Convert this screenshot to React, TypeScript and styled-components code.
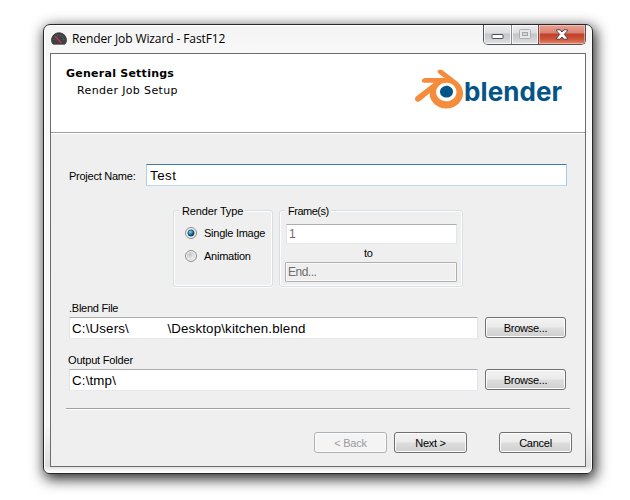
import React from "react";
import styled, { createGlobalStyle, css } from "styled-components";

const GlobalStyle = createGlobalStyle`
  * { box-sizing: border-box; }
  html, body { margin: 0; padding: 0; background: #fff; }
  body { width: 630px; height: 500px; overflow: hidden; }
  input { outline: none; }
`;

const uiFont = css`
  font-family: "Liberation Sans", Arial, sans-serif;
  font-size: 11px;
  line-height: 14px;
  letter-spacing: -0.25px;
  color: #000;
`;

const Desktop = styled.div`
  width: 630px;
  height: 500px;
  padding: 24px 0 0 43px;
`;

const Window = styled.div`
  width: 550px;
  height: 450px;
  border: 1px solid #26282b;
  border-radius: 7px 7px 6px 6px;
  padding: 0 6px 6px;
  background: linear-gradient(to bottom, #f4f4f4 0, #fafafa 40px, #f8f8f8 400px, #dedede 441px, #fff 447px);
  box-shadow: inset 0 0 0 1px #fff, 2px 4px 14px 1px rgba(0, 0, 0, 0.85);
`;

const TitleBar = styled.div`
  height: 28px;
  display: flex;
  align-items: flex-start;
`;

const AppIcon = styled.svg`
  display: block;
  margin: 7px 0 0 1px;
`;

const Title = styled.div<{ $spacing: number }>`
  flex: 1;
  margin: 5px 0 0 5px;
  font: 12px/18px "Open Sans", "Noto Sans", sans-serif;
  letter-spacing: ${(p) => p.$spacing}px;
  color: #000;
  white-space: nowrap;
`;

const CaptionButtons = styled.div`
  display: flex;
  height: 20px;
  width: 103px;
  border: 1px solid #50535c;
  border-top: 0;
  border-radius: 0 0 5px 5px;
  overflow: hidden;
`;

const CaptionButton = styled.button<{ $kind: "min" | "max" | "close" }>`
  width: ${(p) => (p.$kind === "min" ? 28 : p.$kind === "max" ? 27 : 46)}px;
  height: 19px;
  padding: 0;
  display: flex;
  align-items: center;
  justify-content: center;
  border: 0;
  border-right: ${(p) => (p.$kind === "close" ? "0" : p.$kind === "max" ? "1px solid #7e4a48" : "1px solid #8b8d94")};
  box-shadow: inset 0 0 0 1px
    ${(p) => (p.$kind === "close" ? "rgba(255, 215, 200, 0.55)" : "rgba(255, 255, 255, 0.75)")};
  background: ${(p) =>
    p.$kind === "close"
      ? "linear-gradient(#eaa293 0, #d98272 8px, #c2402a 9px, #cc5138 14px, #e08b6b 19px)"
      : "linear-gradient(#eeeef0 0, #dddee1 8px, #c3c5ca 9px, #cfd1d5 14px, #e2e3e6 19px)"};
`;

const Panel = styled.div`
  height: 414px;
  border: 1px solid #6d6d6d;
  background: #efefef;
`;

const Header = styled.div`
  height: 80px;
  display: flex;
  justify-content: space-between;
  background: #fff;
  border-bottom: 1px solid #fff;
  box-shadow: inset 0 -1px 0 #a0a0a0;
`;

const Headings = styled.div`
  padding: 12px 0 0 15px;
  font-family: "DejaVu Sans", Verdana, sans-serif;
  font-size: 11px;
  white-space: nowrap;
`;

const Heading = styled.div`
  font-weight: 700;
  line-height: 15px;
  letter-spacing: 0.25px;
`;

const SubHeading = styled.div`
  margin: 2px 0 0 11px;
  line-height: 15px;
  letter-spacing: 0.36px;
`;

const Logo = styled.div`
  display: flex;
  width: 170px;
  padding-top: 11px;
`;

const LogoMark = styled.svg`
  flex: none;
  display: block;
`;

const LogoText = styled.span`
  margin: 12px 0 0 1px;
  font: 700 26px/30px Inter, sans-serif;
  letter-spacing: 0.1px;
  color: #045488;
`;

const Body = styled.div`
  padding: 30px 15px 0 18px;
`;

const Label = styled.label<{ $width?: number; $shift?: number; $spacing?: number }>`
  ${uiFont}
  display: block;
  width: ${(p) => (p.$width ? `${p.$width}px` : "auto")};
  margin-left: ${(p) => p.$shift ?? 0}px;
  letter-spacing: ${(p) => p.$spacing ?? -0.25}px;
  white-space: pre;
`;

const Row = styled.div`
  display: flex;
  align-items: flex-start;
`;

const NameRow = styled(Row)`
  & > label {
    padding-top: 5px;
  }
`;

const Input = styled.input<{ $width: number; $focused?: boolean }>`
  width: ${(p) => p.$width}px;
  height: 22px;
  padding: 1px 2px 0 ${(p) => (p.$focused ? 3 : 2)}px;
  border: 1px solid;
  border-color: ${(p) => (p.$focused ? "#3d7bad #a4c9e3 #b7d9ed #b5cfe7" : "#abadb3 #e2e3ea #e3e9ef #e2e3ea")};
  border-radius: 1px;
  background: #fff;
  font: 13.33px/18px "Liberation Sans", Arial, sans-serif;
  letter-spacing: ${(p) => (p.$focused ? 0.5 : 0.15)}px;
  color: #000;
`;

const FrameInput = styled(Input)`
  display: block;
  height: 20px;
  margin-left: 1px;
  padding-top: 0;
  font-size: 12px;
  color: #7a5f7d;
  &:disabled {
    margin: 0;
    border-color: #afafaf;
    box-shadow: inset 0 0 0 1px #f9f9f9;
    background: #efefef;
    color: #6d6d6d;
    letter-spacing: -0.5px;
  }
`;

const Groups = styled.div`
  display: flex;
  gap: 6px;
  margin: 24px 0 0 104px;
`;

const Group = styled.div<{ $width: number }>`
  width: ${(p) => p.$width}px;
  height: 77px;
  padding-left: 5px;
  border: 1px solid #d5dfe5;
  border-radius: 3px;
  box-shadow: inset 0 0 0 1px #fff, 0 1px 0 #fbfbfb;
`;

const Legend = styled.div<{ $spacing: number }>`
  ${uiFont}
  width: fit-content;
  margin: -7px 0 0;
  padding: 0 2px 0 3px;
  letter-spacing: ${(p) => p.$spacing}px;
  background: #efefef;
`;

const Radio = styled.div`
  ${uiFont}
  display: flex;
  align-items: center;
  height: 23px;
  padding-left: 6px;
  gap: 7px;
  white-space: nowrap;
`;

const RadioList = styled.div`
  padding-top: 3px;
`;

const FrameFields = styled.div`
  padding-top: 6px;
  & > label {
    margin: 2px 0 2px 79px;
  }
`;

const Field = styled.div`
  margin-top: 14px;
  & > label {
    margin-bottom: 2px;
  }
`;

const Button = styled.button<{ $width: number }>`
  ${uiFont}
  flex: none;
  width: ${(p) => p.$width}px;
  height: 21px;
  padding: 0;
  border: 1px solid #707070;
  border-radius: 3px;
  background: linear-gradient(#f2f2f2 0, #ebebeb 9px, #dddddd 10px, #cfcfcf 19px);
  box-shadow: inset 0 0 0 1px #fcfcfc;
  &:disabled {
    border-color: #adb2b5;
    background: #f4f4f4;
    color: #9a9a9a;
  }
`;

const BrowseRow = styled(Row)`
  gap: 7px;
`;

const Separator = styled.div`
  height: 2px;
  margin: 17px 0 22px -3px;
  width: 504px;
  border-top: 1px solid #a0a0a0;
  background: #fff;
`;

const Footer = styled.div`
  display: flex;
  gap: 7px;
  padding-left: 245px;
  & > :last-child {
    margin-left: 25px;
  }
`;

function RadioDot({ checked }: { checked?: boolean }) {
  const id = checked ? "dot-on" : "dot-off";
  return (
    <svg width="12" height="12" viewBox="0 0 12 12">
      <defs>
        <radialGradient id={id} cx="0.35" cy="0.3" r="0.8">
          <stop offset="0" stopColor={checked ? "#8adcf5" : "#bfc4c9"} />
          <stop offset="0.5" stopColor={checked ? "#267dad" : "#dcdfe1"} />
          <stop offset="1" stopColor={checked ? "#06233d" : "#f4f5f5"} />
        </radialGradient>
      </defs>
      <circle cx="6" cy="6" r="5.5" fill="#f6f6f6" stroke="#8a8c8e" />
      <circle cx="6" cy="6" r="4" fill={checked ? "#d5e0e8" : "#c9cdd1"} />
      <circle cx="6" cy="6" r={checked ? 3.1 : 3.5} fill={`url(#${id})`} stroke={checked ? "#173953" : "none"} strokeWidth="0.7" />
    </svg>
  );
}

export default function App() {
  return (
    <>
      <GlobalStyle />
      <Desktop>
        <Window>
          <TitleBar>
            <AppIcon width="16" height="13" viewBox="0 0 16 13">
              <path d="M2.2 12.2C.6 10.8.2 8.8.7 6.6 1.6 2.9 4.4.8 8 .8s6.4 2.1 7.3 5.8c.5 2.2.1 4.2-1.5 5.6z" fill="#414247" stroke="#28292d" strokeWidth=".7" />
              <path d="M2.6 7.5h1M3.8 4.7l.8.6M6 2.8l.4.8M10 2.8l-.4.8M12.2 4.7l-.8.6M12.4 7.5h1" stroke="#7d7e84" strokeWidth=".7" />
              <path d="M4.2 4.5l6.4 6.6" stroke="#e0343d" strokeWidth="1.1" />
            </AppIcon>
            <Title $spacing={-0.1}>Render Job Wizard - FastF12</Title>
            <CaptionButtons>
              <CaptionButton $kind="min" aria-label="Minimize">
                <svg width="13" height="17" viewBox="0 0 13 17">
                  <rect x="1" y="8.5" width="11" height="4" rx=".5" fill="#fff" stroke="#4c4f63" />
                </svg>
              </CaptionButton>
              <CaptionButton $kind="max" aria-label="Maximize">
                <svg width="12" height="11" viewBox="0 0 12 11">
                  <rect x=".5" y=".5" width="11" height="9" rx="1" fill="#e8e8e9" stroke="#aeafb3" />
                  <rect x="3.5" y="3.5" width="5" height="3" fill="#d5d6d8" stroke="#a5a6ab" />
                </svg>
              </CaptionButton>
              <CaptionButton $kind="close" aria-label="Close">
                <svg width="12" height="11" viewBox="0 0 12 11">
                  <path d="M.6.8h3.5L6 3 7.9.8h3.5v1.1L8.3 5.4l3.1 3.6v1.2H7.9L6 8l-1.9 2.2H.6V9l3.1-3.6L.6 1.9z" fill="#fff" stroke="#51414b" strokeWidth="1" />
                </svg>
              </CaptionButton>
            </CaptionButtons>
          </TitleBar>
          <Panel>
            <Header>
              <Headings>
                <Heading>General Settings</Heading>
                <SubHeading>Render Job Setup</SubHeading>
              </Headings>
              <Logo>
                <LogoMark width="48" height="48" viewBox="0 0 24 24">
                  <path fill="#045488" d="M12.51 13.214c.046-.8.438-1.506 1.03-2.006a3.424 3.424 0 0 1 2.212-.79c.85 0 1.631.3 2.211.79.592.5.983 1.206 1.028 2.005.045.823-.285 1.586-.865 2.153a3.389 3.389 0 0 1-2.374.938 3.393 3.393 0 0 1-2.376-.938c-.58-.567-.91-1.33-.865-2.152" />
                  <path fill="#f58c3c" d="M7.35 14.831c.006.314.106.922.256 1.398a7.372 7.372 0 0 0 1.593 2.757 8.227 8.227 0 0 0 2.787 2.001 8.947 8.947 0 0 0 3.66.76 8.964 8.964 0 0 0 3.657-.772 8.285 8.285 0 0 0 2.785-2.01 7.428 7.428 0 0 0 1.592-2.762 6.964 6.964 0 0 0 .25-3.074 7.123 7.123 0 0 0-1.016-2.779 7.764 7.764 0 0 0-1.852-2.043h.002L13.566 2.55l-.02-.015c-.492-.378-1.319-.376-1.86.002-.547.382-.609 1.015-.123 1.415l-.001.001 3.126 2.543-9.53.01h-.013c-.788.001-1.545.518-1.695 1.172-.154.665.38 1.217 1.2 1.22V8.9l4.83-.01-8.62 6.617-.034.025c-.813.622-1.075 1.658-.563 2.315.52.667 1.625.668 2.447.004L7.414 14s-.069.52-.063.831zm12.09 1.741c-.97.988-2.326 1.548-3.795 1.55-1.47.004-2.827-.552-3.797-1.538a4.51 4.51 0 0 1-1.036-1.622 4.282 4.282 0 0 1 .282-3.519 4.702 4.702 0 0 1 1.153-1.371c.942-.768 2.141-1.183 3.396-1.185 1.256-.002 2.455.41 3.398 1.175.48.391.87.854 1.152 1.367a4.28 4.28 0 0 1 .522 1.706 4.236 4.236 0 0 1-.239 1.811 4.54 4.54 0 0 1-1.035 1.626" />
                </LogoMark>
                <LogoText>blender</LogoText>
              </Logo>
            </Header>
            <Body>
              <NameRow>
                <Label $width={77}>Project Name:</Label>
                <Input $width={421} $focused defaultValue="Test" />
              </NameRow>
              <Groups>
                <Group $width={100}>
                  <Legend $spacing={-0.15}>Render Type</Legend>
                  <RadioList>
                    <Radio><RadioDot checked />Single Image</Radio>
                    <Radio><RadioDot />Animation</Radio>
                  </RadioList>
                </Group>
                <Group $width={184}>
                  <Legend $spacing={-0.5}>Frame(s)</Legend>
                  <FrameFields>
                    <FrameInput $width={171} defaultValue="1" />
                    <Label>to</Label>
                    <FrameInput $width={172} defaultValue="End..." disabled />
                  </FrameFields>
                </Group>
              </Groups>
              <Field>
                <Label>.Blend File</Label>
                <BrowseRow>
                  <Input $width={409} defaultValue={"C:\\Users\\\u00a0\u00a0\u00a0\u00a0\u00a0\u00a0\u00a0\u00a0\u00a0\u00a0\\Desktop\\kitchen.blend"} />
                  <Button $width={81}>Browse...</Button>
                </BrowseRow>
              </Field>
              <Field>
                <Label $shift={-1} $spacing={-0.18}>Output Folder</Label>
                <BrowseRow>
                  <Input $width={409} defaultValue={"C:\\tmp\\"} />
                  <Button $width={81}>Browse...</Button>
                </BrowseRow>
              </Field>
              <Separator />
              <Footer>
                <Button $width={73} disabled>&lt; Back</Button>
                <Button $width={73}>Next &gt;</Button>
                <Button $width={73}>Cancel</Button>
              </Footer>
            </Body>
          </Panel>
        </Window>
      </Desktop>
    </>
  );
}
